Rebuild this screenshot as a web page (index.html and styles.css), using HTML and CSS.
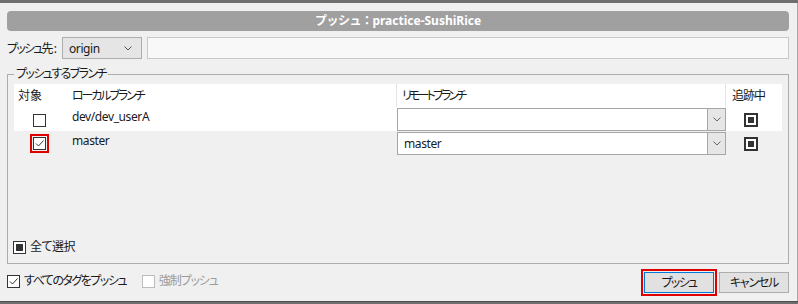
FILE: index.html
```html
<!DOCTYPE html>
<html lang="ja">
<head>
<meta charset="utf-8">
<link rel="stylesheet" href="styles.css">
</head>
<body>
<div class="win">
  <div class="strip-top"></div>
  <div class="dialog">
    <div class="titlebar"><span class="jp-t">プッシュ：</span>practice-SushiRice</div>
    <div class="dest">
      <span class="dest-label">プッシュ先<span class="colon">:</span></span>
      <div class="combo origin">
        <span class="combo-text latin">origin</span>
        <svg class="chev" width="8" height="5" viewBox="0 0 8 5"><polyline points="0.5,0.5 4,4 7.5,0.5" fill="none" stroke="#555" stroke-width="1"/></svg>
      </div>
      <div class="textbox"></div>
    </div>
    <div class="group">
      <span class="legend">プッシュするブランチ</span>
      <div class="grid">
        <div class="row head">
          <div class="c1">対象</div>
          <div class="c2 sep"><span class="ls-local">ローカルブランチ</span></div>
          <div class="c3 sep"><span class="ls-remote">リモートブランチ</span></div>
          <div class="c4"><span class="ls-track">追跡中</span></div>
        </div>
        <div class="row r1">
          <div class="c1"><span class="cb"></span></div>
          <div class="c2 name latin">dev/dev_userA</div>
          <div class="c3">
            <div class="rcombo"><span class="rcombo-text"></span><span class="dd"><svg width="8" height="5" viewBox="0 0 8 5"><polyline points="0.5,0.5 4,4 7.5,0.5" fill="none" stroke="#666" stroke-width="1"/></svg></span></div>
          </div>
          <div class="c4"><span class="cb cb-fill cb-thick"><span class="fill"></span></span></div>
        </div>
        <div class="row r2">
          <div class="c1"><span class="cb cb-hl"><svg width="11" height="11" viewBox="0 0 11 11"><polyline points="2,5.5 4.5,8 9.5,2.5" fill="none" stroke="#333" stroke-width="1"/></svg></span></div>
          <div class="c2 name latin">master</div>
          <div class="c3">
            <div class="rcombo"><span class="rcombo-text latin">master</span><span class="dd"><svg width="8" height="5" viewBox="0 0 8 5"><polyline points="0.5,0.5 4,4 7.5,0.5" fill="none" stroke="#666" stroke-width="1"/></svg></span></div>
          </div>
          <div class="c4"><span class="cb cb-fill cb-thick"><span class="fill"></span></span></div>
        </div>
      </div>
      <div class="selall">
        <span class="cb cb-fill"><span class="fill"></span></span>
        <span class="lbl ls-all">全て選択</span>
      </div>
    </div>
    <div class="bottom">
      <div class="chk">
        <span class="cb"><svg width="11" height="11" viewBox="0 0 11 11"><polyline points="2,5.5 4.5,8 9.5,2.5" fill="none" stroke="#333" stroke-width="1"/></svg></span>
        <span class="lbl ls-tags">すべてのタグをプッシュ</span>
      </div>
      <div class="chk disabled">
        <span class="cb"></span>
        <span class="lbl ls-force">強制プッシュ</span>
      </div>
      <div class="buttons">
        <button class="btn btn-primary"><span class="ls-push">プッシュ</span></button>
        <button class="btn"><span class="ls-cancel">キャンセル</span></button>
      </div>
    </div>
  </div>
  <div class="strip-bottom"></div>
</div>
</body>
</html>
```

FILE: styles.css
```css
* { box-sizing: border-box; }
html, body { margin: 0; padding: 0; }
body {
  background: #f0f0f0;
  font-family: "Noto Sans", "Noto Sans CJK JP", sans-serif;
  font-size: 12px;
  color: #1a1a1a;
  font-feature-settings: "palt";
}
.latin { letter-spacing: -0.4px; }
.win {
  width: 798px;
  height: 304px;
  display: flex;
  flex-direction: column;
  overflow: hidden;
}
.strip-top {
  height: 3px;
  background: #6f6f6f;
  flex: none;
}
.strip-bottom {
  height: 3px;
  background: #6e6e6e;
  border-top: 1px solid #4e4e4e;
  flex: none;
}
.dialog {
  flex: 1;
  padding: 8px 8px 0 7px;
  border-right: 1px solid #a8a8a8;
  display: flex;
  flex-direction: column;
}
.titlebar {
  height: 20px;
  background: #a0a0a0;
  border-radius: 4px;
  color: #fff;
  font-weight: bold;
  text-align: center;
  line-height: 20px;
}
.jp-t { letter-spacing: -0.5px; font-feature-settings: normal; }
.dest {
  margin-top: 6px;
  height: 22px;
  display: flex;
  align-items: center;
}
.dest-label {
  width: 55px;
  flex: none;
  white-space: nowrap;
  letter-spacing: -1.8px;
}
.colon { margin-left: 2px; letter-spacing: 0; }
.combo {
  height: 22px;
  border: 1px solid #adadad;
  background: #e5e5e5;
  display: flex;
  align-items: center;
}
.origin {
  width: 80px;
  padding: 0 9px 0 6px;
  justify-content: space-between;
}
.textbox {
  flex: 1;
  height: 22px;
  margin-left: 5px;
  border: 1px solid #c8c8c8;
  background: #f8f8f8;
}
.group {
  margin-top: 15px;
  height: 190px;
  border: 1px solid #adadad;
  padding: 0 6px 8px 6px;
  display: flex;
  flex-direction: column;
}
.legend {
  align-self: flex-start;
  margin-top: -8px;
  padding: 0 2px;
  line-height: 14px;
  background: #f0f0f0;
  letter-spacing: -1.6px;
}
.grid {
  margin-top: 3px;
}
.row {
  display: flex;
  height: 24px;
}
.row.head {
  height: 23px;
  background: #fff;
  line-height: 23px;
  white-space: nowrap;
}
.ls-local { letter-spacing: -2.1px; }
.ls-remote { letter-spacing: -2.8px; }
.ls-track { letter-spacing: -1px; }
.ls-all { letter-spacing: -0.5px; }
.ls-tags { letter-spacing: -1.5px; }
.ls-force { letter-spacing: -1.2px; }
.ls-push { letter-spacing: -1.7px; }
.ls-cancel { letter-spacing: -1.2px; }
.row.r1 { background: #fff; }
.c1 { width: 52px; padding-left: 4px; flex: none; }
.c2 { width: 331px; padding-left: 6px; flex: none; }
.c3 { width: 329px; padding-left: 5px; flex: none; }
.c4 { width: 56px; padding-left: 6px; flex: none; }
.head .sep { border-right: 1px solid #e4e4e4; }
.row.r1 .c1 { padding-left: 19px; padding-top: 7px; }
.row.r2 .c1 { padding-left: 19px; padding-top: 6px; }
.name { padding-top: 2px; line-height: 16px; }
.row.r1 .c3, .row.r2 .c3 { padding-left: 0; padding-top: 1px; }
.row.r1 .c4, .row.r2 .c4 { padding-left: 18px; padding-top: 6px; }
.rcombo {
  height: 23px;
  border: 1px solid #a6a6a6;
  background: #fff;
  display: flex;
}
.rcombo-text {
  flex: 1;
  padding-left: 6px;
  line-height: 21px;
}
.dd {
  width: 18px;
  background: #e6e6e6;
  border-left: 1px solid #a6a6a6;
  display: flex;
  align-items: center;
  justify-content: center;
}
.cb {
  display: inline-flex;
  align-items: center;
  justify-content: center;
  width: 13px;
  height: 13px;
  border: 1px solid #333;
  background: #fff;
  vertical-align: top;
  flex: none;
}
.cb-fill .fill {
  width: 7px;
  height: 7px;
  background: #333;
}
.cb-thick {
  width: 14px;
  height: 14px;
  border-width: 2px;
}
.cb-thick .fill { width: 6px; height: 6px; }
.cb-hl {
  outline: 2px solid #e00000;
  outline-offset: 1px;
}
.selall {
  margin-top: auto;
  display: flex;
  align-items: center;
  height: 16px;
  margin-left: -1px;
}
.lbl { line-height: 16px; white-space: nowrap; }
.selall .lbl { margin-left: 4px; }
.bottom {
  margin-top: 8px;
  height: 21px;
  display: flex;
  align-items: flex-start;
}
.chk {
  margin-top: 1px;
  height: 16px;
  display: flex;
  align-items: center;
}
.chk .lbl { margin-left: 4px; }
.chk.disabled { margin-left: 16px; color: #9c9c9c; }
.chk.disabled .cb { border-color: #bcbcbc; }
.buttons {
  margin-left: auto;
  display: flex;
  gap: 5px;
}
.btn {
  width: 70px;
  height: 21px;
  border: 1px solid #adadad;
  background: #e1e1e1;
  font: inherit;
  color: #1a1a1a;
  padding: 0;
  line-height: 19px;
}
.btn-primary {
  border-color: #0078d7;
  outline: 2px solid #e00000;
  outline-offset: 1px;
}
```
